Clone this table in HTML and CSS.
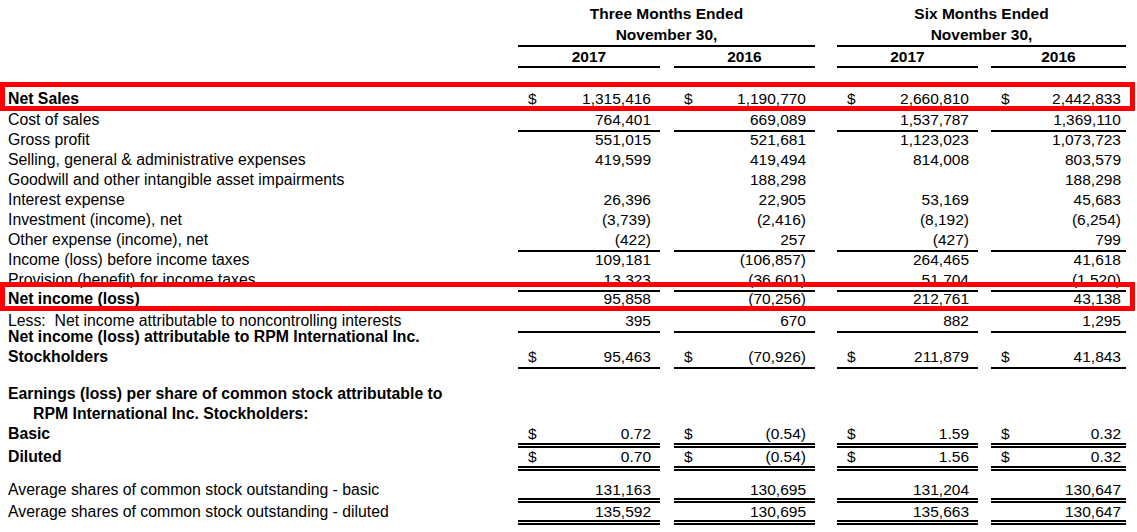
FILE: index.html
```html
<!DOCTYPE html>
<html>
<head>
<meta charset="utf-8">
<link rel="stylesheet" href="styles.css">
</head>
<body>
<div class="page">
  <div class="hdr">
    <div class="hspacer"></div>
    <div class="group g1">
      <div class="gtitle">Three Months Ended<br>November 30,</div>
      <div class="years"><div class="yr y1">2017</div><div class="yr y2">2016</div></div>
    </div>
    <div class="group g2">
      <div class="gtitle">Six Months Ended<br>November 30,</div>
      <div class="years"><div class="yr y3">2017</div><div class="yr y4">2016</div></div>
    </div>
  </div>

  <div class="body">
    <div class="row boxed">
      <div class="lbl b">Net Sales</div>
      <div class="c c1"><span class="d">$</span><span class="n">1,315,416</span></div>
      <div class="c c2"><span class="d">$</span><span class="n">1,190,770</span></div>
      <div class="c c3"><span class="d">$</span><span class="n">2,660,810</span></div>
      <div class="c c4"><span class="d">$</span><span class="n">2,442,833</span></div>
      <div class="hl"></div>
    </div>
    <div class="row u">
      <div class="lbl">Cost of sales</div>
      <div class="c c1"><span class="n">764,401</span></div>
      <div class="c c2"><span class="n">669,089</span></div>
      <div class="c c3"><span class="n">1,537,787</span></div>
      <div class="c c4"><span class="n">1,369,110</span></div>
    </div>
    <div class="row">
      <div class="lbl">Gross profit</div>
      <div class="c c1"><span class="n">551,015</span></div>
      <div class="c c2"><span class="n">521,681</span></div>
      <div class="c c3"><span class="n">1,123,023</span></div>
      <div class="c c4"><span class="n">1,073,723</span></div>
    </div>
    <div class="row">
      <div class="lbl">Selling, general &amp; administrative expenses</div>
      <div class="c c1"><span class="n">419,599</span></div>
      <div class="c c2"><span class="n">419,494</span></div>
      <div class="c c3"><span class="n">814,008</span></div>
      <div class="c c4"><span class="n">803,579</span></div>
    </div>
    <div class="row">
      <div class="lbl">Goodwill and other intangible asset impairments</div>
      <div class="c c1"><span class="n"></span></div>
      <div class="c c2"><span class="n">188,298</span></div>
      <div class="c c3"><span class="n"></span></div>
      <div class="c c4"><span class="n">188,298</span></div>
    </div>
    <div class="row">
      <div class="lbl">Interest expense</div>
      <div class="c c1"><span class="n">26,396</span></div>
      <div class="c c2"><span class="n">22,905</span></div>
      <div class="c c3"><span class="n">53,169</span></div>
      <div class="c c4"><span class="n">45,683</span></div>
    </div>
    <div class="row">
      <div class="lbl">Investment (income), net</div>
      <div class="c c1"><span class="n">(3,739)</span></div>
      <div class="c c2"><span class="n">(2,416)</span></div>
      <div class="c c3"><span class="n">(8,192)</span></div>
      <div class="c c4"><span class="n">(6,254)</span></div>
    </div>
    <div class="row u">
      <div class="lbl">Other expense (income), net</div>
      <div class="c c1"><span class="n">(422)</span></div>
      <div class="c c2"><span class="n">257</span></div>
      <div class="c c3"><span class="n">(427)</span></div>
      <div class="c c4"><span class="n">799</span></div>
    </div>
    <div class="row">
      <div class="lbl">Income (loss) before income taxes</div>
      <div class="c c1"><span class="n">109,181</span></div>
      <div class="c c2"><span class="n">(106,857)</span></div>
      <div class="c c3"><span class="n">264,465</span></div>
      <div class="c c4"><span class="n">41,618</span></div>
    </div>
    <div class="row u">
      <div class="lbl">Provision (benefit) for income taxes</div>
      <div class="c c1"><span class="n">13,323</span></div>
      <div class="c c2"><span class="n">(36,601)</span></div>
      <div class="c c3"><span class="n">51,704</span></div>
      <div class="c c4"><span class="n">(1,520)</span></div>
    </div>
    <div class="row boxed">
      <div class="lbl b">Net income (loss)</div>
      <div class="c c1"><span class="n">95,858</span></div>
      <div class="c c2"><span class="n">(70,256)</span></div>
      <div class="c c3"><span class="n">212,761</span></div>
      <div class="c c4"><span class="n">43,138</span></div>
      <div class="hl"></div>
    </div>
    <div class="row u less">
      <div class="lbl">Less:&nbsp; Net income attributable to noncontrolling interests</div>
      <div class="c c1"><span class="n">395</span></div>
      <div class="c c2"><span class="n">670</span></div>
      <div class="c c3"><span class="n">882</span></div>
      <div class="c c4"><span class="n">1,295</span></div>
    </div>
    <div class="row u tall">
      <div class="lbl b">Net income (loss) attributable to RPM International Inc.<br>Stockholders</div>
      <div class="c c1"><span class="d">$</span><span class="n">95,463</span></div>
      <div class="c c2"><span class="d">$</span><span class="n">(70,926)</span></div>
      <div class="c c3"><span class="d">$</span><span class="n">211,879</span></div>
      <div class="c c4"><span class="d">$</span><span class="n">41,843</span></div>
    </div>

    <div class="eps-head b">
      <div>Earnings (loss) per share of common stock attributable to</div>
      <div class="indent">RPM International Inc. Stockholders:</div>
    </div>
    <div class="row dbl eps first">
      <div class="lbl b">Basic</div>
      <div class="c c1"><span class="d">$</span><span class="n">0.72</span></div>
      <div class="c c2"><span class="d">$</span><span class="n">(0.54)</span></div>
      <div class="c c3"><span class="d">$</span><span class="n">1.59</span></div>
      <div class="c c4"><span class="d">$</span><span class="n">0.32</span></div>
    </div>
    <div class="row dbl eps">
      <div class="lbl b">Diluted</div>
      <div class="c c1"><span class="d">$</span><span class="n">0.70</span></div>
      <div class="c c2"><span class="d">$</span><span class="n">(0.54)</span></div>
      <div class="c c3"><span class="d">$</span><span class="n">1.56</span></div>
      <div class="c c4"><span class="d">$</span><span class="n">0.32</span></div>
    </div>

    <div class="row dbl avg first">
      <div class="lbl">Average shares of common stock outstanding - basic</div>
      <div class="c c1"><span class="n">131,163</span></div>
      <div class="c c2"><span class="n">130,695</span></div>
      <div class="c c3"><span class="n">131,204</span></div>
      <div class="c c4"><span class="n">130,647</span></div>
    </div>
    <div class="row dbl avg">
      <div class="lbl">Average shares of common stock outstanding - diluted</div>
      <div class="c c1"><span class="n">135,592</span></div>
      <div class="c c2"><span class="n">130,695</span></div>
      <div class="c c3"><span class="n">135,663</span></div>
      <div class="c c4"><span class="n">130,647</span></div>
    </div>
  </div>
</div>
</body>
</html>
```

FILE: styles.css
```css
html, body {
  margin: 0;
  padding: 0;
  background: #ffffff;
  color: #000000;
}

body {
  font-family: "Liberation Sans", Arial, sans-serif;
  overflow: hidden;
}

.page {
  padding-left: 8px;
  width: 1129px;
}

/* ---------- header ---------- */
.hdr {
  display: flex;
  padding-top: 3px;
}

.hspacer {
  width: 510px;
  flex: none;
}

.group {
  flex: none;
  display: flex;
  flex-direction: column;
}

.g1 { width: 297px; }
.g2 { width: 289px; margin-left: 22px; }

.gtitle {
  font-weight: bold;
  font-size: 15.5px;
  line-height: 21px;
  text-align: center;
  border-bottom: 2px solid #000;
}

.years {
  display: flex;
}

.yr {
  flex: none;
  text-align: center;
  font-weight: bold;
  font-size: 15.5px;
  line-height: 19px;
  border-bottom: 2px solid #000;
}

.y1 { width: 142px; }
.y2 { width: 141px; margin-left: 14px; }
.y3 { width: 141px; }
.y4 { width: 135px; margin-left: 13px; }

/* ---------- body rows ---------- */
.body {
  margin-top: 22px;
}

.row {
  display: flex;
  height: 20px;
}

.boxed {
  position: relative;
  box-sizing: border-box;
  padding-bottom: 2px;
}

.lbl {
  width: 510px;
  flex: none;
  font-size: 15.8px;
  line-height: 20px;
  white-space: nowrap;
}

.b {
  font-weight: bold;
}

.c {
  flex: none;
  display: flex;
  align-items: center;
  height: 20px;
  padding: 0 9px 0 10px;
  box-sizing: content-box;
  font-size: 15.5px;
  line-height: 20px;
  white-space: nowrap;
}

.boxed .lbl,
.boxed .c {
  height: 18px;
  line-height: 18px;
}

.c1 { width: 123px; }
.c2 { width: 122px; margin-left: 14px; }
.c3 { width: 122px; margin-left: 22px; }
.c4 { width: 120px; margin-left: 13px; padding-right: 5px; }

.n {
  margin-left: auto;
}

.u .c {
  border-bottom: 2px solid #000;
}

.less {
  margin-top: 1px;
}

.tall {
  height: 40px;
  margin-top: -4px;
}

.tall .c {
  height: 40px;
  align-items: flex-end;
}

/* red highlight boxes */
.hl {
  position: absolute;
  left: -8px;
  top: -8px;
  width: 1135px;
  height: 29px;
  box-sizing: border-box;
  border: 5px solid #ff0000;
}

/* EPS section */
.eps-head {
  margin-top: 17px;
  font-size: 15.8px;
  line-height: 20px;
  white-space: nowrap;
}

.indent {
  padding-left: 25px;
}

.dbl .c {
  border-bottom: 5px double #000;
}

.eps {
  height: 23px;
}

.eps .lbl {
  line-height: 18px;
}

.eps .c {
  height: 18px;
}

.eps.first {
  margin-top: 1px;
}

.avg {
  height: 22px;
}

.avg .lbl {
  line-height: 17px;
}

.avg .c {
  height: 17px;
}

.avg.first {
  margin-top: 10px;
}
```
